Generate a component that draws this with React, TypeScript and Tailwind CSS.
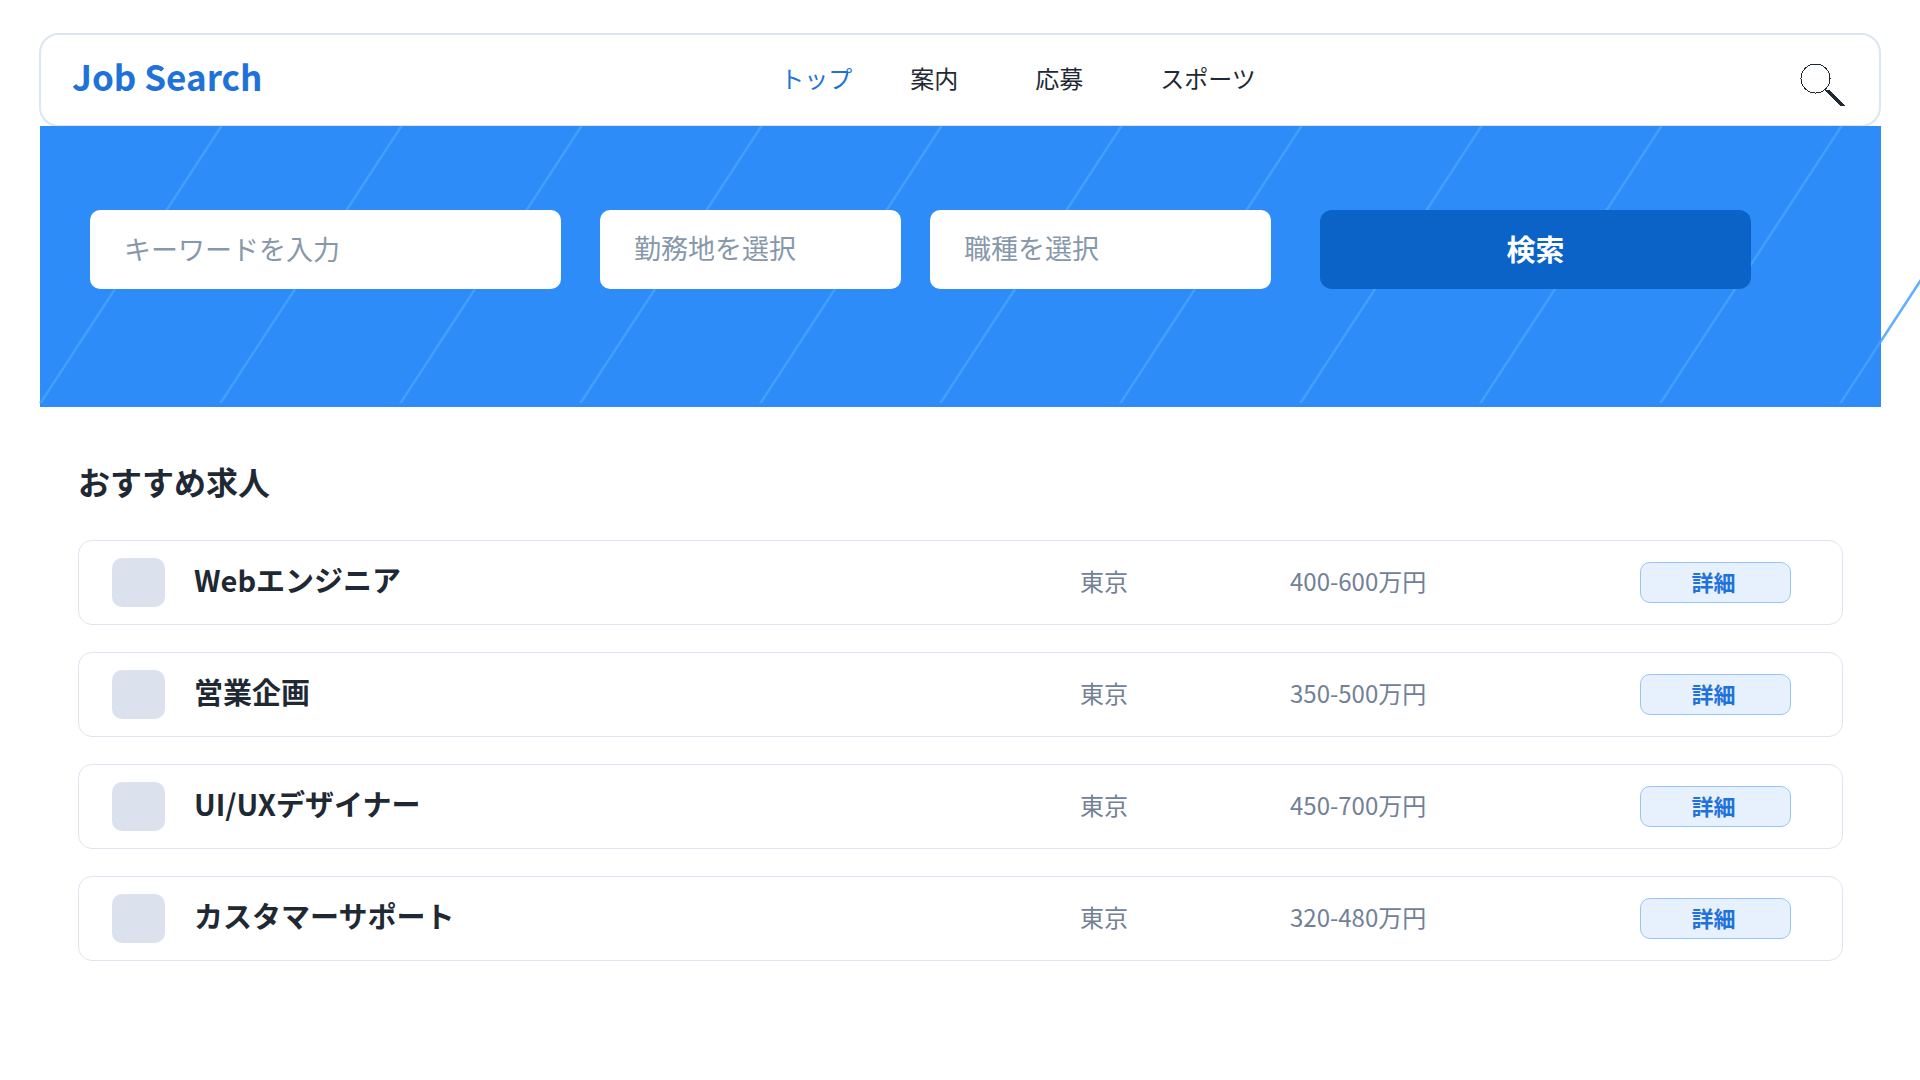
const navItems = [
  { label: "トップ", active: true },
  { label: "案内", active: false },
  { label: "応募", active: false },
  { label: "スポーツ", active: false },
];

const jobs = [
  { title: "Webエンジニア", place: "東京", pay: "400-600万円" },
  { title: "営業企画", place: "東京", pay: "350-500万円" },
  { title: "UI/UXデザイナー", place: "東京", pay: "450-700万円" },
  { title: "カスタマーサポート", place: "東京", pay: "320-480万円" },
];

const stripes = Array.from({ length: 11 }, (_, i) => i * 180);

function SearchIcon() {
  return (
    <svg width="45" height="44" viewBox="0 0 45 44" fill="none" shapeRendering="crispEdges" aria-hidden="true">
      <circle cx="15.5" cy="16.5" r="14.5" stroke="#1f2933" />
      <path d="M25 28H29.500L45 44H40.500Z" fill="#1f2933" />
    </svg>
  );
}

function Header() {
  return (
    <header className="relative -ml-px grid h-[94px] grid-cols-[2fr_3fr] items-center rounded-[20px] border-2 border-[#dde6f0] bg-white pr-[34px] pl-[31px]">
      <a href="#" className="pb-2 text-[35px] leading-[48px] font-bold text-[#1f73d8]">
        Job Search
      </a>
      <div className="flex items-center justify-between">
        <nav className="-ml-px grid grid-cols-[130px_125px_125px_auto] pb-1 text-2xl">
          {navItems.map((item) => (
            <a key={item.label} href="#" className={item.active ? "text-[#1f73d8]" : "text-[#1f2933]"}>
              {item.label}
            </a>
          ))}
        </nav>
        <button type="button" aria-label="検索を開く" className="pt-2">
          <SearchIcon />
        </button>
      </div>
    </header>
  );
}

function Hero() {
  const field = "h-[79px] w-full appearance-none rounded-[10px] bg-white px-[34px] pb-0.5 text-[27px] text-[#8798ab] outline-none";
  return (
    <section className="relative h-[281px] bg-[#2d8cf7] pt-[84px] pr-[130px] pl-[50px]">
      <svg className="pointer-events-none absolute top-0 left-0 overflow-visible" width="100%" height="277" aria-hidden="true">
        {stripes.map((x) => (
          <path key={x} d={`M${x - 1} 277L${x + 180} 0h3L${x + 2} 277z`} fill="#49a1ff" fillOpacity="0.86" />
        ))}
      </svg>
      <form className="relative flex" onSubmit={(e) => e.preventDefault()}>
        <div className="mr-[39px] flex-[471]">
          <input type="text" aria-label="キーワード" placeholder="キーワードを入力" className={field + " placeholder:text-[#8798ab]"} />
        </div>
        <div className="mr-[29px] flex-[301]">
          <select aria-label="勤務地" className={field}>
            <option>勤務地を選択</option>
          </select>
        </div>
        <div className="mr-[49px] flex-[341]">
          <select aria-label="職種" className={field}>
            <option>職種を選択</option>
          </select>
        </div>
        <button type="submit" className="h-[79px] flex-[431] rounded-[12px] bg-[#0b63c8] pb-0.5 text-[29px] font-bold text-white">
          検索
        </button>
      </form>
    </section>
  );
}

function JobList() {
  return (
    <main className="pt-[50px] pr-[38px] pl-[38px]">
      <h1 className="text-[32px] leading-[48px] font-bold text-[#1f2933]">おすすめ求人</h1>
      <ul className="mt-[35px] flex flex-col gap-[27px]">
        {jobs.map((job) => (
          <li key={job.title} className="flex h-[85px] items-center rounded-[14px] border border-[#dde6f0] bg-white pr-[51px] pl-[33px]">
            <div className="h-[49px] w-[53px] rounded-[10px] bg-[#dbe2ee]" />
            <h2 className="ml-[29px] flex-1 pb-2 text-[29px] leading-[40px] font-bold text-[#1f2933]">{job.title}</h2>
            <p className="w-[210px] pb-1 text-2xl text-[#728197]">{job.place}</p>
            <p className="w-[350px] pb-1 text-2xl text-[#728197]">{job.pay}</p>
            <button type="button" className="flex h-[41px] w-[151px] items-center justify-center rounded-[10px] border border-[#96c4f3] bg-[#e7f1fe] pr-1 pb-0.5 text-[22px] font-bold text-[#1f73d8]">
              詳細
            </button>
          </li>
        ))}
      </ul>
    </main>
  );
}

export default function App() {
  return (
    <div lang="ja" className="min-h-screen overflow-hidden bg-white pt-[33px] pr-[39px] pb-10 pl-10 font-['Noto_Sans_CJK_JP',sans-serif]">
      <Header />
      <div className="-mt-px">
        <Hero />
      </div>
      <JobList />
    </div>
  );
}
